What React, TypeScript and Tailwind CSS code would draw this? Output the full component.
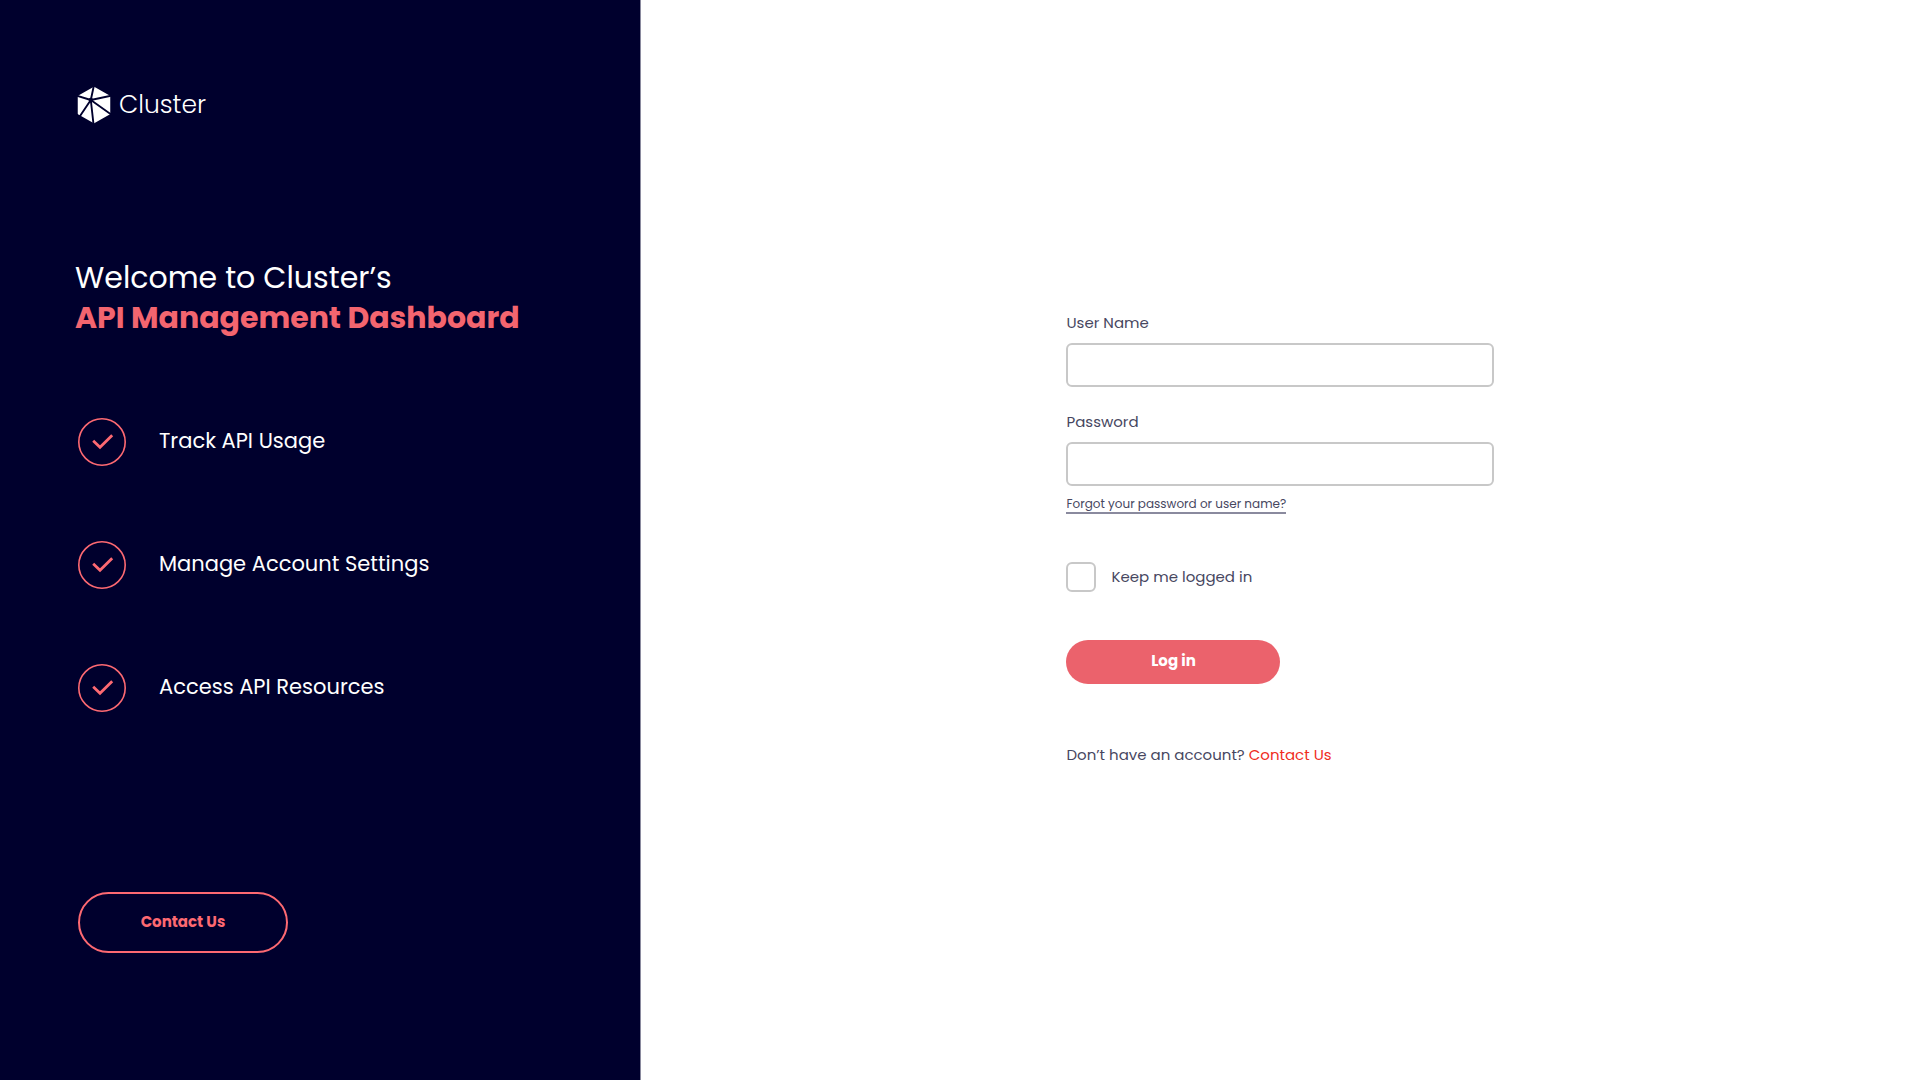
const FEATURES = ['Track API Usage', 'Manage Account Settings', 'Access API Resources'];

const LogoMark = () => {
  return (
    <svg width="34" height="38" viewBox="0 0 34 38" fill="none" aria-hidden="true">
      <path
        d="M17 2 L32 10.5 V27.5 L17 36 L2 27.5 V10.5 Z"
        fill="#fff"
        stroke="#fff"
        strokeWidth="2.5"
        strokeLinejoin="round"
      />
      <path
        d="M13.8 14 L17 -1 M13.8 14 L35 9.6 M13.8 14 L35 29 M13.8 14 L16.6 39 M13.8 14 L1 33 M13.8 14 L-1 9.4"
        stroke="#00002d"
        strokeWidth="1.9"
      />
      <circle cx="13.8" cy="14" r="2.2" fill="#00002d" />
    </svg>
  );
};

const CheckCircle = () => {
  return (
    <svg className="shrink-0" width="48" height="48" viewBox="0 0 48 48" fill="none" aria-hidden="true">
      <circle cx="24" cy="24" r="23.2" stroke="#fd6972" strokeWidth="1.6" />
      <path d="M15.2 22.8 L22 29.2 L34.2 17.2" stroke="#fd6972" strokeWidth="2.8" />
    </svg>
  );
};

const WelcomePanel = () => {
  return (
    <aside className="w-1/3 bg-[#00002d] pl-[75px] pr-8 pt-[86px] pb-[127px] flex flex-col text-white">
      <div className="flex items-center gap-2 pl-[2px]">
        <LogoMark />
        <span className="text-[25px] leading-8 font-light">Cluster</span>
      </div>

      <h1 className="mt-[134px] text-[30px] leading-10">
        Welcome to Cluster’s
        <strong className="block font-bold text-[#f3656f]">API Management Dashboard</strong>
      </h1>

      <ul className="mt-20 pl-[3px] flex flex-col gap-[75px]">
        {FEATURES.map((feature) => (
          <li key={feature} className="flex items-center gap-[33px]">
            <CheckCircle />
            <span className="pb-[3px] text-[21px] leading-8">{feature}</span>
          </li>
        ))}
      </ul>

      <button
        type="button"
        className="mt-auto ml-[3px] h-[61px] w-[210px] rounded-full border-2 border-[#fd6972] text-[15px] font-bold text-[#fd6972]"
      >
        Contact Us
      </button>
    </aside>
  );
};

const LoginForm = () => {
  return (
    <form className="w-[428px] max-w-full pb-[2px] text-[15px] text-[#47475f]">
      <label htmlFor="username" className="block leading-6">
        User Name
      </label>
      <input
        id="username"
        type="text"
        className="mt-2 block h-11 w-full rounded-md border-2 border-[#c8c8c8] px-3"
      />

      <label htmlFor="password" className="mt-[23px] block leading-6">
        Password
      </label>
      <input
        id="password"
        type="password"
        className="mt-2 block h-11 w-full rounded-md border-2 border-[#c8c8c8] px-3"
      />
      <a href="#forgot" className="mt-[9px] block w-fit border-b-2 border-[#8a8a9e] text-xs leading-[17px]">
        Forgot your password or user name?
      </a>

      <div className="mt-12 flex items-center gap-[15px]">
        <input
          id="remember"
          type="checkbox"
          className="size-[30px] appearance-none rounded-md border-2 border-[#c8c8c8] checked:bg-[#eb626c]"
        />
        <label htmlFor="remember">Keep me logged in</label>
      </div>

      <button
        type="submit"
        className="mt-12 block h-11 w-1/2 rounded-full bg-[#eb626c] pb-[2px] font-bold text-white"
      >
        Log in
      </button>

      <p className="mt-[59px] leading-6">
        Don’t have an account?{' '}
        <a href="#contact" className="text-[#f02d1e]">
          Contact Us
        </a>
      </p>
    </form>
  );
};

const App = () => {
  return (
    <div className="flex min-h-screen bg-white font-['Poppins','Inter',sans-serif]">
      <WelcomePanel />
      <main className="flex flex-1 items-center justify-center border-l border-[#8a8a9e]">
        <LoginForm />
      </main>
    </div>
  );
};

export default App;
